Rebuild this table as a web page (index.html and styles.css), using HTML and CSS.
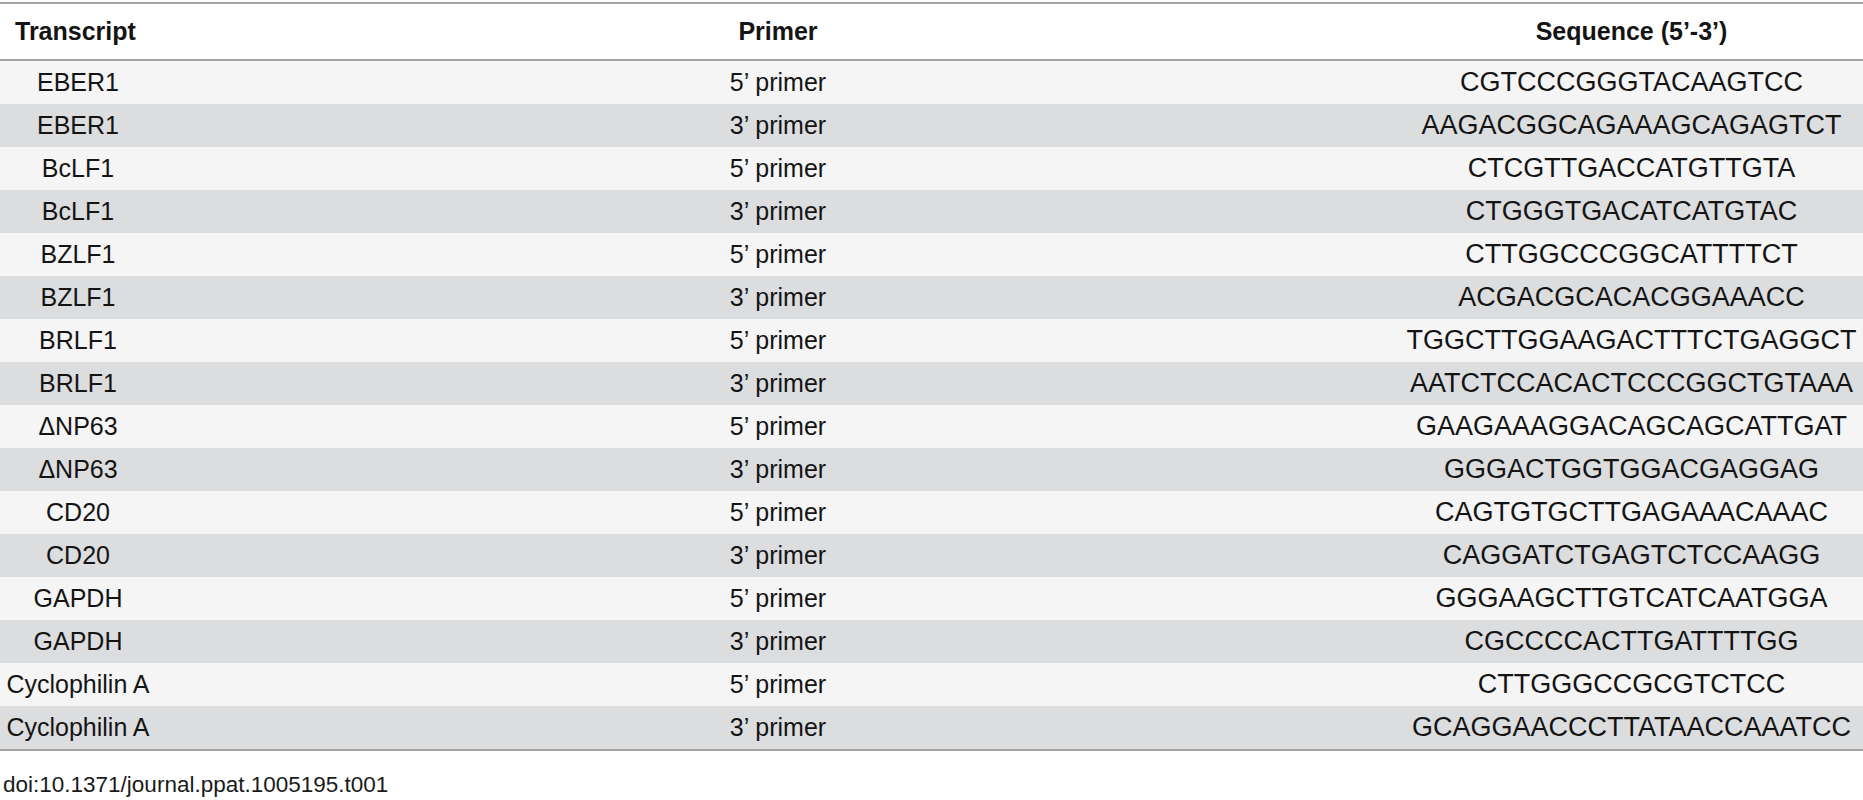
FILE: index.html
```html
<!DOCTYPE html>
<html lang="en">
<head>
<meta charset="utf-8">
<title>Primers</title>
<link rel="stylesheet" href="styles.css">
</head>
<body>
<div class="table">
  <div class="head">
    <div class="c1">Transcript</div>
    <div class="c2">Primer</div>
    <div class="c3">Sequence (5’-3’)</div>
  </div>
  <div class="body">
    <div class="row"><div class="c1">EBER1</div><div class="c2">5’ primer</div><div class="c3">CGTCCCGGGTACAAGTCC</div></div>
    <div class="row"><div class="c1">EBER1</div><div class="c2">3’ primer</div><div class="c3">AAGACGGCAGAAAGCAGAGTCT</div></div>
    <div class="row"><div class="c1">BcLF1</div><div class="c2">5’ primer</div><div class="c3">CTCGTTGACCATGTTGTA</div></div>
    <div class="row"><div class="c1">BcLF1</div><div class="c2">3’ primer</div><div class="c3">CTGGGTGACATCATGTAC</div></div>
    <div class="row"><div class="c1">BZLF1</div><div class="c2">5’ primer</div><div class="c3">CTTGGCCCGGCATTTTCT</div></div>
    <div class="row"><div class="c1">BZLF1</div><div class="c2">3’ primer</div><div class="c3">ACGACGCACACGGAAACC</div></div>
    <div class="row"><div class="c1">BRLF1</div><div class="c2">5’ primer</div><div class="c3">TGGCTTGGAAGACTTTCTGAGGCT</div></div>
    <div class="row"><div class="c1">BRLF1</div><div class="c2">3’ primer</div><div class="c3">AATCTCCACACTCCCGGCTGTAAA</div></div>
    <div class="row"><div class="c1">ΔNP63</div><div class="c2">5’ primer</div><div class="c3">GAAGAAAGGACAGCAGCATTGAT</div></div>
    <div class="row"><div class="c1">ΔNP63</div><div class="c2">3’ primer</div><div class="c3">GGGACTGGTGGACGAGGAG</div></div>
    <div class="row"><div class="c1">CD20</div><div class="c2">5’ primer</div><div class="c3">CAGTGTGCTTGAGAAACAAAC</div></div>
    <div class="row"><div class="c1">CD20</div><div class="c2">3’ primer</div><div class="c3">CAGGATCTGAGTCTCCAAGG</div></div>
    <div class="row"><div class="c1">GAPDH</div><div class="c2">5’ primer</div><div class="c3">GGGAAGCTTGTCATCAATGGA</div></div>
    <div class="row"><div class="c1">GAPDH</div><div class="c2">3’ primer</div><div class="c3">CGCCCCACTTGATTTTGG</div></div>
    <div class="row"><div class="c1">Cyclophilin A</div><div class="c2">5’ primer</div><div class="c3">CTTGGGCCGCGTCTCC</div></div>
    <div class="row"><div class="c1">Cyclophilin A</div><div class="c2">3’ primer</div><div class="c3">GCAGGAACCCTTATAACCAAATCC</div></div>
  </div>
</div>
<p class="doi">doi:10.1371/journal.ppat.1005195.t001</p>
</body>
</html>
```

FILE: styles.css
```css
html, body {
  margin: 0;
  padding: 0;
  background: #ffffff;
}

body {
  font-family: "Liberation Sans", Arial, sans-serif;
  color: #141414;
}

.table {
  margin-top: 2px;
  border-top: 2px solid #a3a3a3;
  border-bottom: 2px solid #a3a3a3;
}

.head,
.row {
  display: grid;
  grid-template-columns: 156px 1244px 1fr;
  align-items: center;
  white-space: nowrap;
}

.head {
  height: 55px;
  border-bottom: 2px solid #a3a3a3;
  font-weight: bold;
  font-size: 25px;
}

.head .c1 {
  text-align: left;
  padding-left: 15px;
}

.row {
  height: 43px;
  font-size: 25px;
}

.row:nth-child(odd) {
  background: #f5f5f5;
}

.row:nth-child(even) {
  background: #dcdddf;
}

.c1,
.c2,
.c3 {
  text-align: center;
}

.row .c1 {
  display: flex;
  justify-content: center;
}

.row .c3 {
  font-size: 27px;
}

.doi {
  margin: 21px 0 0 3px;
  font-size: 22.5px;
  color: #1a1a1a;
}
```
